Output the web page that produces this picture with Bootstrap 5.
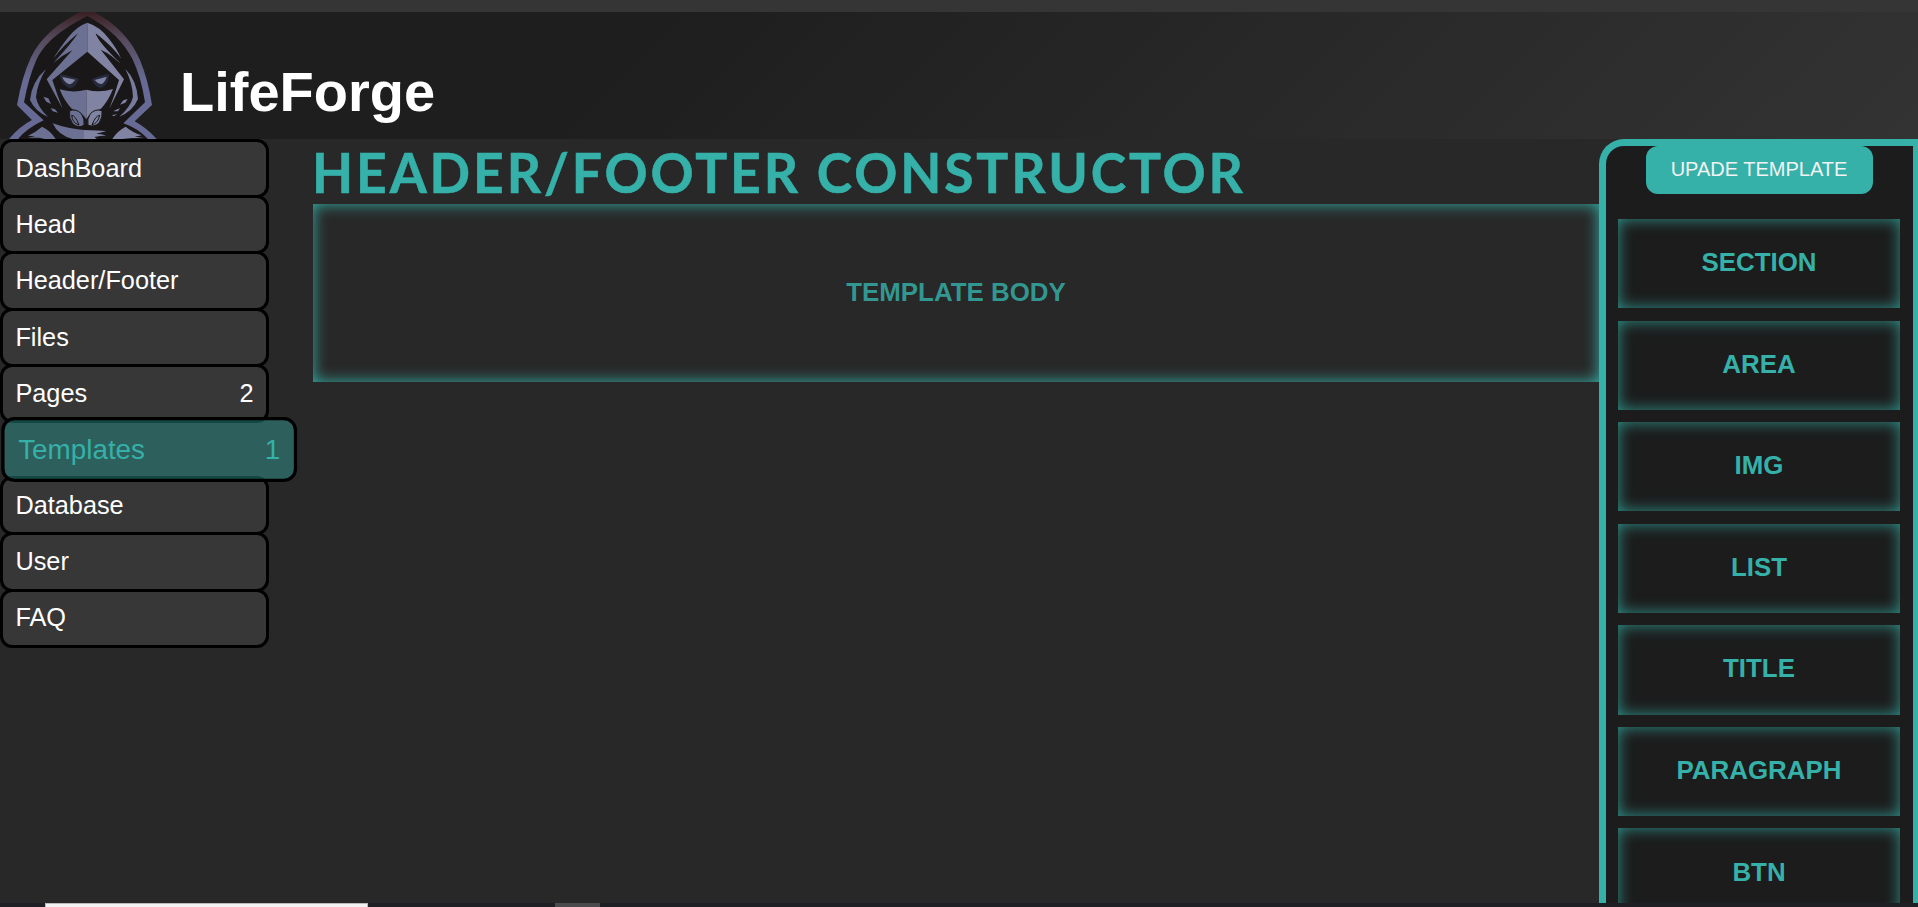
<!DOCTYPE html>
<html lang="en">
<head>
<meta charset="utf-8">
<title>LifeForge</title>
<link href="https://cdn.jsdelivr.net/npm/bootstrap@5.3.0/dist/css/bootstrap.min.css" rel="stylesheet">
<style>
:root{--teal:#35b1a9;--teal-rgb:53,177,169}
body{height:907px;background:#282828;color:#fff;font-family:"Liberation Sans",Arial,sans-serif;font-size:25.9px}
.top-strip{height:12px;background:#353535}
.site-header{height:127px;background:linear-gradient(135deg,#1e1e1e 33%,#333 100%)}
.logo{width:160px;height:127px}
.brand-name{font-size:56px;line-height:64px;margin:48px 0 0 20px}
.workspace{height:764px}
.side-menu{width:269px;margin-right:44px}
.menu-item{height:59.2px;margin-bottom:-3px;padding:0 12.4px;border:3px solid #000;border-radius:12px;background:#373737;color:#fff;font-size:25.3px;line-height:1}
.menu-item.active{position:relative;z-index:2;background:rgba(var(--teal-rgb),.4);color:var(--teal);transform:translateX(14.7px) scale(1.1)}
.page-title{height:65px;font-family:Lato,"Open Sans",sans-serif;font-size:55.5px;line-height:65px;letter-spacing:3px;color:var(--teal);text-indent:-1px;-webkit-text-stroke:.6px var(--teal);transform:scaleX(.962);transform-origin:0 0}
.template-body{height:178px;box-shadow:inset 0 0 15px var(--teal);color:rgba(var(--teal-rgb),.82);padding-bottom:2px}
.tools{width:321px;margin-right:-2px;border:7px solid var(--teal);border-bottom:0;border-radius:25px 0 0 0;background:#1c1c1c;padding:0 13px 0 12px}
.btn-update{width:227px;height:48px;margin-bottom:25px;border-radius:12px;background:var(--teal);color:#f2f2f2;font-size:20px;padding:0 0 3px}
.tool-box{height:89.2px;margin-bottom:12.4px;box-shadow:inset 0 0 15px rgba(var(--teal-rgb),.8);color:var(--teal);padding-bottom:2px}
.bottom-strip{height:4px;background:#1d1f25}
.strip-search{width:323px;margin-left:45px;background:#f2f2f2;border:1px solid #bbb;border-bottom:0}
.strip-tab{width:45px;margin-left:187px;background:#4b4b4d}
</style>
</head>
<body class="d-flex flex-column overflow-hidden">
<div class="top-strip flex-shrink-0"></div>
<header class="site-header d-flex flex-shrink-0">
<svg class="logo flex-shrink-0" viewBox="0 36 480 381" aria-hidden="true">
<defs>
<linearGradient id="rim" x1="0" y1="36" x2="0" y2="240" gradientUnits="userSpaceOnUse"><stop offset="0" stop-color="#3a2024"/><stop offset=".4" stop-color="#564a5c"/><stop offset="1" stop-color="#666a94"/></linearGradient>
</defs>
<path fill="url(#rim)" d="M241 36Q262 28 283 36C350 72 395 122 420 180Q444 238 456 315L404 364Q440 384 470 417H27Q60 378 96 360L51 315Q66 230 92 174C120 115 172 70 241 36Z"/>
<path fill="#1a1718" d="M262 48C330 84 373 130 397 176Q424 232 435 307L370 370Q412 384 444 417H54Q82 384 131 361L72 307Q86 232 110 178C138 120 194 84 262 48Z"/>
<!-- hood -->
<path fill="#6c7194" d="M262 68Q232 78 206 110Q176 148 160 176Q186 140 234 100Q212 134 160 189Q186 166 217 151L140 238L188 326Q172 286 157 240L262 155Z"/>
<path fill="#8083a2" d="M262 68Q300 80 325 114Q354 150 363 176Q340 142 287 100Q296 128 361 190Q334 172 303 150L372 238L328 326Q346 280 357 240L262 155Z"/>
<path fill="#1a1718" d="M287 101Q320 124 361 172Q310 148 287 101ZM303 150Q336 164 361 193Q330 182 303 150Z"/>
<path fill="#666b91" d="M138 207Q95 245 90 300Q105 334 144 351Q112 320 108 291Q112 250 138 207Z"/>
<path fill="#777b9e" d="M376 207Q410 240 414 297Q398 334 358 350Q392 320 399 291Q398 250 376 207Z"/>
<path fill="#6c7194" d="M130 290L145 295L153 312L139 305ZM152 324L165 328L174 338L158 334Z"/>
<path fill="#8083a2" d="M383 297L370 301L360 314L376 308ZM360 325L348 329L340 334L354 334ZM352 343L336 345L341 349Z"/>
<!-- eyes -->
<path fill="#252a3c" d="M178 222Q206 228 237 236Q226 264 208 265Q183 254 178 222ZM328 222Q298 226 275 238Q284 262 304 264Q326 253 328 222Z"/>
<path fill="#8083a2" d="M187 231L226 239Q218 251 207 253Q192 247 187 231ZM320 230L284 240Q292 251 304 253Q316 246 320 230Z"/>
<!-- mask -->
<path fill="#6c7194" d="M179 268Q218 280 259 269V358Q244 334 216 327Q192 302 179 268Z"/>
<path fill="#8083a2" d="M339 267Q299 280 259 269V358Q270 336 302 327Q325 303 339 267Z"/>
<path fill="#6c7194" stroke="#1a1718" stroke-width="3" d="M209 332Q228 325 244 341Q255 356 252 376Q234 386 218 371Q205 354 209 332Z"/>
<path fill="#8083a2" stroke="#1a1718" stroke-width="3" d="M306 332Q287 325 271 341Q260 357 264 376Q283 382 297 369Q309 352 306 332Z"/>
<path fill="none" stroke="#1a1718" stroke-width="3" d="M215 346Q226 346 237 375Q217 369 215 346M299 346Q288 346 276 374Q294 370 299 346"/>
<!-- scarf and shoulders -->
<path fill="#6c7194" d="M158 370Q205 387 260 391L318 393L288 401L318 406L282 410L290 417H218Q174 406 158 370Z"/>
<path fill="#8083a2" d="M252 391L318 393L288 401L318 406L282 410L290 417H252Z"/>
<path fill="#6c7194" d="M126 380Q153 393 167 417H134L118 413H83L106 409L84 407Q107 397 126 380Z"/>
<path fill="#8083a2" d="M377 380Q350 394 337 417H368L396 414H432L404 410L425 406Q397 397 377 380Z"/>
</svg>
<h1 class="brand-name fw-bold">LifeForge</h1>
</header>
<div class="workspace d-flex flex-shrink-0 overflow-hidden">
<nav class="side-menu flex-shrink-0 d-flex flex-column">
<a class="menu-item d-flex align-items-center flex-shrink-0 text-decoration-none">DashBoard</a>
<a class="menu-item d-flex align-items-center flex-shrink-0 text-decoration-none">Head</a>
<a class="menu-item d-flex align-items-center flex-shrink-0 text-decoration-none">Header/Footer</a>
<a class="menu-item d-flex align-items-center flex-shrink-0 text-decoration-none">Files</a>
<a class="menu-item d-flex align-items-center flex-shrink-0 text-decoration-none">Pages<span class="ms-auto">2</span></a>
<a class="menu-item active d-flex align-items-center flex-shrink-0 text-decoration-none">Templates<span class="ms-auto">1</span></a>
<a class="menu-item d-flex align-items-center flex-shrink-0 text-decoration-none">Database</a>
<a class="menu-item d-flex align-items-center flex-shrink-0 text-decoration-none">User</a>
<a class="menu-item d-flex align-items-center flex-shrink-0 text-decoration-none">FAQ</a>
</nav>
<main class="flex-grow-1">
<h2 class="page-title fw-bold mb-0 text-nowrap">HEADER/FOOTER CONSTRUCTOR</h2>
<div class="template-body d-flex align-items-center justify-content-center fw-bold">TEMPLATE BODY</div>
</main>
<aside class="tools flex-shrink-0 d-flex flex-column">
<button class="btn btn-update border-0 align-self-center flex-shrink-0">UPADE TEMPLATE</button>
<div class="tool-box d-flex align-items-center justify-content-center flex-shrink-0 fw-bold">SECTION</div>
<div class="tool-box d-flex align-items-center justify-content-center flex-shrink-0 fw-bold">AREA</div>
<div class="tool-box d-flex align-items-center justify-content-center flex-shrink-0 fw-bold">IMG</div>
<div class="tool-box d-flex align-items-center justify-content-center flex-shrink-0 fw-bold">LIST</div>
<div class="tool-box d-flex align-items-center justify-content-center flex-shrink-0 fw-bold">TITLE</div>
<div class="tool-box d-flex align-items-center justify-content-center flex-shrink-0 fw-bold">PARAGRAPH</div>
<div class="tool-box d-flex align-items-center justify-content-center flex-shrink-0 fw-bold">BTN</div>
</aside>
</div>
<div class="bottom-strip d-flex flex-shrink-0"><div class="strip-search"></div><div class="strip-tab"></div></div>
<script src="https://cdn.jsdelivr.net/npm/bootstrap@5.3.0/dist/js/bootstrap.bundle.min.js"></script>
</body>
</html>
